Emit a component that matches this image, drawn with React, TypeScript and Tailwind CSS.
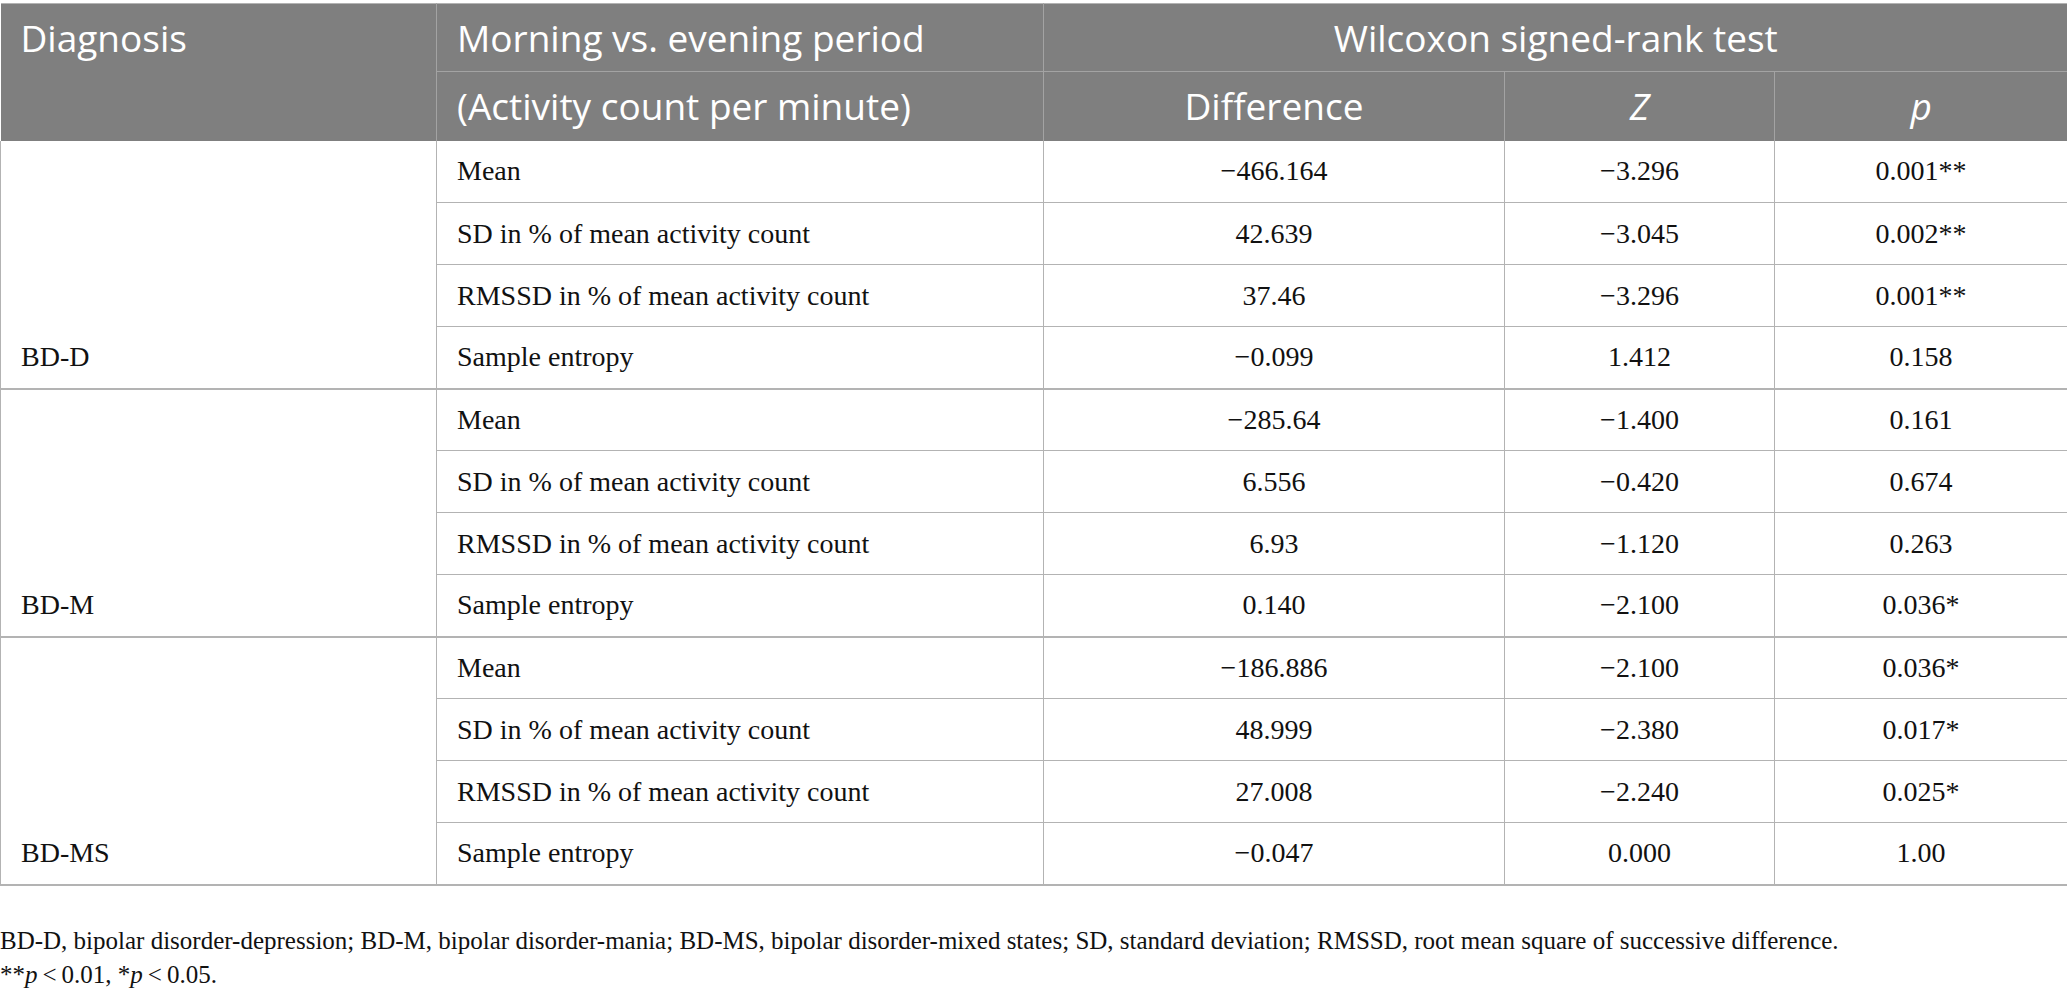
import React from "react";

type Row = { label: string; diff: string; z: string; p: string };
type Group = { name: string; rows: Row[] };

const groups: Group[] = [
  {
    name: "BD-D",
    rows: [
      { label: "Mean", diff: "−466.164", z: "−3.296", p: "0.001**" },
      { label: "SD in % of mean activity count", diff: "42.639", z: "−3.045", p: "0.002**" },
      { label: "RMSSD in % of mean activity count", diff: "37.46", z: "−3.296", p: "0.001**" },
      { label: "Sample entropy", diff: "−0.099", z: "1.412", p: "0.158" },
    ],
  },
  {
    name: "BD-M",
    rows: [
      { label: "Mean", diff: "−285.64", z: "−1.400", p: "0.161" },
      { label: "SD in % of mean activity count", diff: "6.556", z: "−0.420", p: "0.674" },
      { label: "RMSSD in % of mean activity count", diff: "6.93", z: "−1.120", p: "0.263" },
      { label: "Sample entropy", diff: "0.140", z: "−2.100", p: "0.036*" },
    ],
  },
  {
    name: "BD-MS",
    rows: [
      { label: "Mean", diff: "−186.886", z: "−2.100", p: "0.036*" },
      { label: "SD in % of mean activity count", diff: "48.999", z: "−2.380", p: "0.017*" },
      { label: "RMSSD in % of mean activity count", diff: "27.008", z: "−2.240", p: "0.025*" },
      { label: "Sample entropy", diff: "−0.047", z: "0.000", p: "1.00" },
    ],
  },
];

const sans = "font-['Open_Sans',sans-serif]";
const serif = "font-['Liberation_Serif',serif]";

export default function App() {
  return (
    <div className="min-h-screen bg-white pt-[3px]">
      <table className="w-[2067px] table-fixed border-collapse border-t border-[#b3b3b3]">
        <colgroup>
          <col className="w-[436px]" />
          <col className="w-[607px]" />
          <col className="w-[461px]" />
          <col className="w-[270px]" />
          <col className="w-[293px]" />
        </colgroup>
        <thead className={`${sans} bg-[#7f7f7f] text-[37px] leading-[44px] text-white`}>
          <tr>
            <th rowSpan={2} className="border-r border-[#a3a3a3] p-0 text-left align-top font-normal">
              <div className="flex h-[68px] items-center pl-[20px]">Diagnosis</div>
            </th>
            <th className="h-[68px] border-b border-r border-[#a3a3a3] pl-[20px] text-left font-normal">
              Morning vs. evening period
            </th>
            <th colSpan={3} className="h-[68px] border-b border-[#a3a3a3] text-center font-normal">
              Wilcoxon signed-rank test
            </th>
          </tr>
          <tr>
            <th className="h-[69px] border-r border-[#a3a3a3] pl-[20px] text-left font-normal">
              (Activity count per minute)
            </th>
            <th className="h-[69px] border-r border-[#a3a3a3] text-center font-normal">Difference</th>
            <th className="h-[69px] border-r border-[#a3a3a3] text-center font-normal italic">Z</th>
            <th className="h-[69px] text-center font-normal italic">p</th>
          </tr>
        </thead>
        <tbody className={`${serif} text-[28px] text-[#111]`}>
          {groups.map((g) =>
            g.rows.map((r, i) => (
              <tr key={g.name + i} className={i === 3 ? "border-b-2 border-[#b3b3b3]" : "border-b border-[#b3b3b3]"}>
                {i === 0 && (
                  <td rowSpan={4} className="border-x border-[#b3b3b3] p-0 align-bottom">
                    <div className="flex h-[62px] items-center pl-[20px]">{g.name}</div>
                  </td>
                )}
                <td className="h-[62px] border-r border-[#b3b3b3] pl-[20px]">{r.label}</td>
                <td className="border-r border-[#b3b3b3] text-center">{r.diff}</td>
                <td className="border-r border-[#b3b3b3] text-center">{r.z}</td>
                <td className="border-r border-[#b3b3b3] text-center">{r.p}</td>
              </tr>
            ))
          )}
        </tbody>
      </table>
      <div className={`${serif} mt-[38px] text-[25px] leading-[34px] text-[#111]`}>
        <p>
          BD-D, bipolar disorder-depression; BD-M, bipolar disorder-mania; BD-MS, bipolar disorder-mixed states; SD,
          standard deviation; RMSSD, root mean square of successive difference.
        </p>
        <p>
          **<i>p</i>&thinsp;&lt;&thinsp;0.01, *<i>p</i>&thinsp;&lt;&thinsp;0.05.
        </p>
      </div>
    </div>
  );
}
